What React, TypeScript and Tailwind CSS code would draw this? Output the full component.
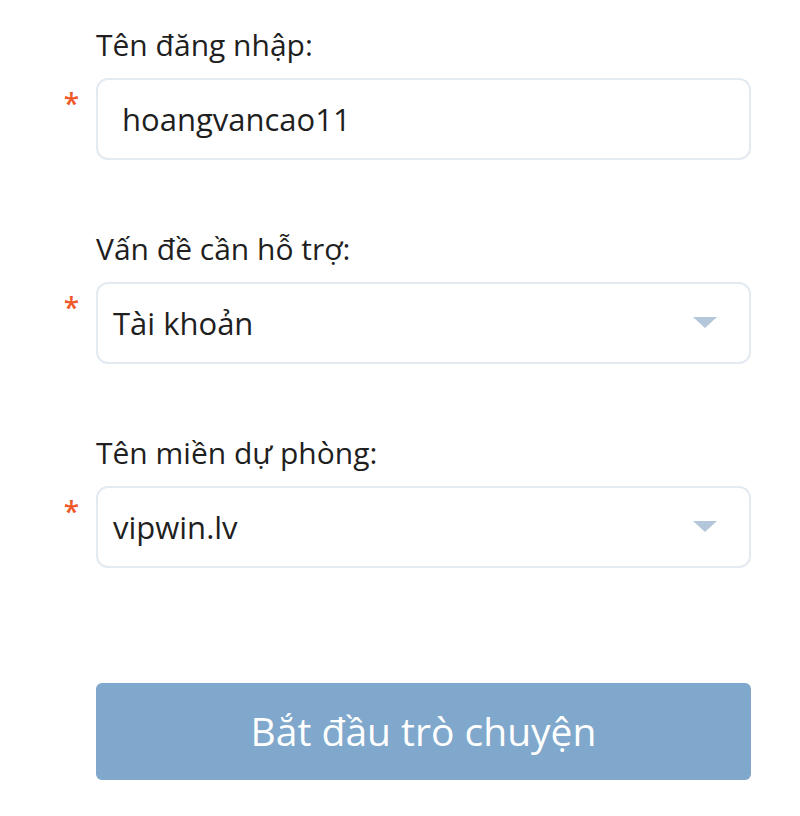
import { useState } from "react";

const font = { fontFamily: "'Open Sans', 'Noto Sans', sans-serif" };

function Field({ label, children }: { label: string; children: React.ReactNode }) {
  return (
    <div className="flex flex-col">
      <div className="pl-[96px] h-[30px] mb-[18px] text-[30px] leading-[30px] text-[#1f1f1f]">{label}</div>
      <div className="flex">
        <div className="w-[96px] flex justify-end pr-[17px] pt-[10px] text-[28px] leading-[30px] font-semibold text-[#f0592a]">*</div>
        {children}
      </div>
    </div>
  );
}

function Arrow() {
  return (
    <svg width="24" height="12" viewBox="0 0 24 12" className="shrink-0">
      <path d="M0 0 H24 L12 11 Z" fill="#b3c6da" />
    </svg>
  );
}

export default function App() {
  const [user, setUser] = useState("hoangvancao11");

  return (
    <div className="w-[800px] h-[816px] bg-white pt-[30px] pr-[49px]" style={font}>
      <div className="flex flex-col gap-[74px]">
        <Field label="Tên đăng nhập:">
          <input
            value={user}
            onChange={(e) => setUser(e.target.value)}
            className="flex-1 h-[82px] rounded-[12px] border-2 border-[#e3eaf2] px-[24px] text-[31px] text-[#1f1f1f] outline-none"
            style={font}
          />
        </Field>
        <Field label="Vấn đề cần hỗ trợ:">
          <div className="flex-1 h-[82px] rounded-[12px] border-2 border-[#e3eaf2] pl-[15px] pr-[32px] flex items-center justify-between text-[31px] text-[#1f1f1f]">
            <span>Tài khoản</span>
            <Arrow />
          </div>
        </Field>
        <Field label="Tên miền dự phòng:">
          <div className="flex-1 h-[82px] rounded-[12px] border-2 border-[#e3eaf2] pl-[15px] pr-[32px] flex items-center justify-between text-[31px] text-[#1f1f1f]">
            <span>vipwin.lv</span>
            <Arrow />
          </div>
        </Field>
      </div>
      <div className="pl-[96px] mt-[115px]">
        <button className="w-full h-[97px] rounded-[6px] bg-[#7fa8cc] text-white text-[39px]" style={font}>
          Bắt đầu trò chuyện
        </button>
      </div>
    </div>
  );
}
